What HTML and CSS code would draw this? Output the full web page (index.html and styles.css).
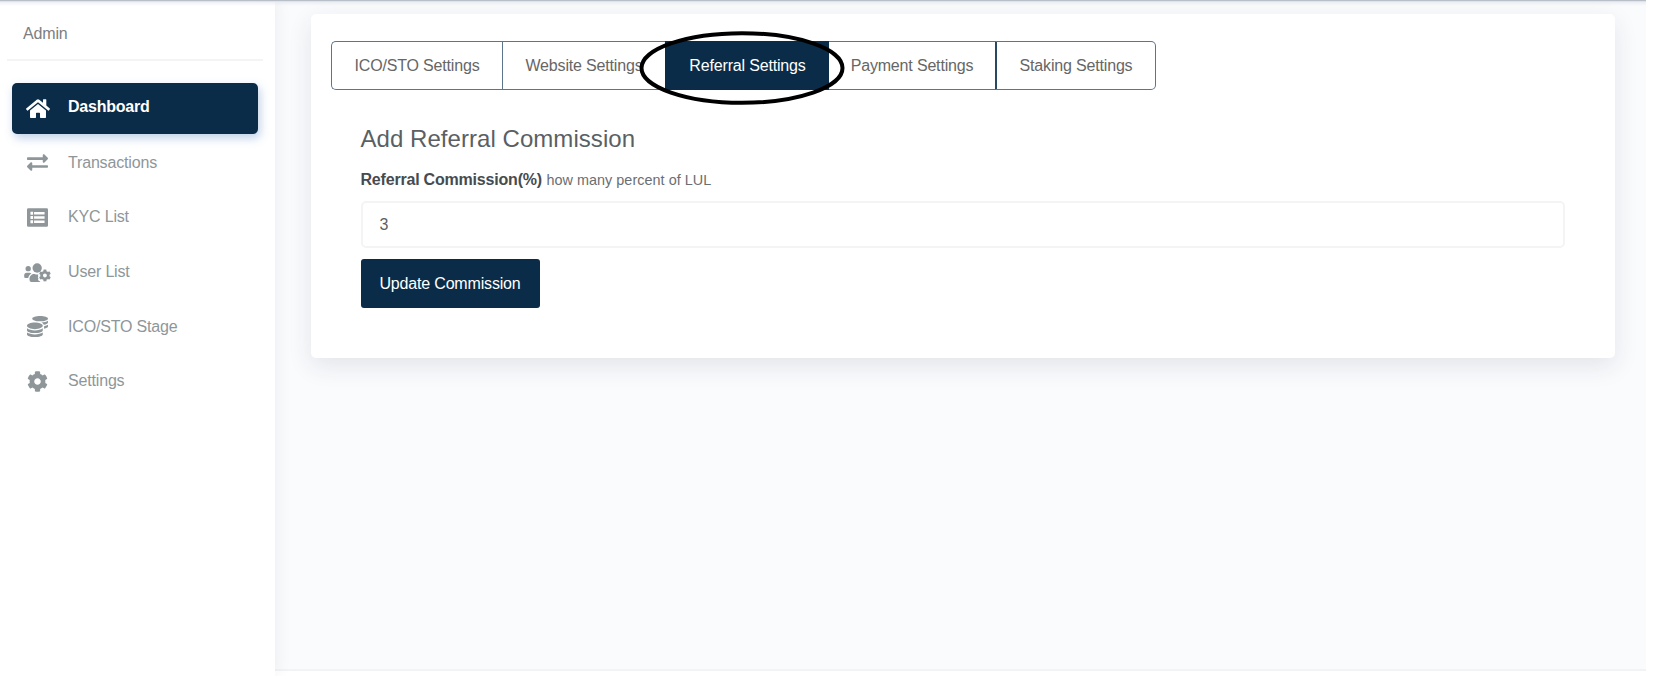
FILE: index.html
```html
<!DOCTYPE html>
<html lang="en">
<head>
<meta charset="utf-8">
<title>Referral Settings</title>
<link rel="stylesheet" href="styles.css">
</head>
<body>
<div class="app">
  <aside class="sidebar">
    <div class="role"><span class="t-admin">Admin</span></div>
    <nav class="menu">
      <a class="item active"><svg class="icon" width="24" height="21.3" viewBox="0 0 576 512"><path d="M280.37 148.26L96 300.11V464a16 16 0 0 0 16 16l112.06-.29a16 16 0 0 0 15.92-16V368a16 16 0 0 1 16-16h64a16 16 0 0 1 16 16v95.64a16 16 0 0 0 16 16.05L464 480a16 16 0 0 0 16-16V300L295.67 148.26a12.19 12.19 0 0 0-15.3 0zM571.6 251.47L488 182.56V44.05a12 12 0 0 0-12-12h-56a12 12 0 0 0-12 12v72.61L318.47 43a48 48 0 0 0-61 0L4.34 251.47a12 12 0 0 0-1.6 16.9l25.5 31A12 12 0 0 0 45.15 301l235.22-193.74a12.19 12.19 0 0 1 15.3 0L530.9 301a12 12 0 0 0 16.9-1.6l25.5-31a12 12 0 0 0-1.7-16.93z"/></svg><span>Dashboard</span></a>
      <a class="item"><svg class="icon" width="21" height="21" viewBox="0 0 512 512"><path d="M0 168v-16c0-13.255 10.745-24 24-24h360V80c0-21.367 25.899-32.042 40.971-16.971l80 80c9.372 9.373 9.372 24.569 0 33.941l-80 80C409.956 271.982 384 261.456 384 240v-48H24c-13.255 0-24-10.745-24-24zm488 152H128v-48c0-21.314-25.862-32.08-40.971-16.971l-80 80c-9.372 9.373-9.372 24.569 0 33.941l80 80C102.057 463.997 128 453.437 128 432v-48h360c13.255 0 24-10.745 24-24v-16c0-13.255-10.745-24-24-24z"/></svg><span>Transactions</span></a>
      <a class="item"><svg class="icon" width="21" height="21" viewBox="0 0 512 512"><path fill-rule="evenodd" d="M32 32h448a32 32 0 0 1 32 32v384a32 32 0 0 1-32 32H32a32 32 0 0 1-32-32V64a32 32 0 0 1 32-32zM84 116v72h64v-72zM84 220v72h64v-72zM84 324v72h64v-72zM172 122v60h256v-60zM172 226v60h256v-60zM172 330v60h256v-60z"/></svg><span>KYC List</span></a>
      <a class="item"><svg class="icon" width="27" height="21.3" viewBox="0 0 640 512"><circle cx="96" cy="160" r="64"/><circle cx="312" cy="144" r="112"/><path d="M64 256h64c18 0 34 7 46 19-42 23-71 64-77 109H32a32 32 0 0 1-32-32v-32a64 64 0 0 1 64-64z"/><path d="M244 288h9c38 18 80 18 90 0-14 22-10 40-4 54-16 24-12 38 8 50-18 16-16 44 4 60l34 18v10H176a48 48 0 0 1-48-48v-29c0-64 52-115 116-115z"/><path fill-rule="evenodd" transform="translate(350 176) scale(.58)" d="M487.4 315.7l-42.6-24.6c4.3-23.2 4.3-47 0-70.2l42.6-24.6c4.9-2.8 7.1-8.6 5.5-14-11.1-35.6-30-67.8-54.7-94.6-3.8-4.1-10-5.1-14.8-2.3L380.8 110c-17.9-15.4-38.5-27.3-60.8-35.1V25.8c0-5.6-3.9-10.5-9.4-11.7-36.7-8.2-74.3-7.8-109.2 0-5.5 1.2-9.4 6.1-9.4 11.7V75c-22.2 7.9-42.8 19.8-60.8 35.1L88.7 85.5c-4.9-2.8-11-1.9-14.8 2.3-24.7 26.7-43.6 58.9-54.7 94.6-1.7 5.4.6 11.2 5.5 14L67.3 221c-4.3 23.2-4.3 47 0 70.2l-42.6 24.6c-4.9 2.8-7.1 8.6-5.5 14 11.1 35.6 30 67.8 54.7 94.6 3.8 4.1 10 5.1 14.8 2.3l42.6-24.6c17.9 15.4 38.5 27.3 60.8 35.1v49.2c0 5.6 3.9 10.5 9.4 11.7 36.7 8.2 74.3 7.8 109.2 0 5.5-1.2 9.4-6.1 9.4-11.7v-49.2c22.2-7.9 42.8-19.8 60.8-35.1l42.6 24.6c4.9 2.8 11 1.9 14.8-2.3 24.7-26.7 43.6-58.9 54.7-94.6 1.5-5.5-.7-11.3-5.6-14.1zM256 336c-44.1 0-80-35.9-80-80s35.9-80 80-80 80 35.9 80 80-35.9 80-80 80z"/></svg><span>User List</span></a>
      <a class="item"><svg class="icon" width="21" height="21" viewBox="0 0 512 512"><path d="M0 405.3V448c0 35.3 86 64 192 64s192-28.7 192-64v-42.7C342.7 434.4 267.2 448 192 448S41.3 434.4 0 405.3zM320 128c106 0 192-28.7 192-64S426 0 320 0 128 28.7 128 64s86 64 192 64zM0 300.4V352c0 35.3 86 64 192 64s192-28.7 192-64v-51.6c-41.3 34-116.9 51.6-192 51.6S41.3 334.4 0 300.4zm416 11c57.3-11.1 96-31.7 96-55.4v-42.7c-23.2 16.4-57.3 27.6-96 34.5v63.6zM192 160C86 160 0 195.8 0 240s86 80 192 80 192-35.8 192-80-86-80-192-80zm219.3 56.3c60-10.8 100.7-32 100.7-56.3v-42.7c-35.5 25.1-96.5 38.6-160.7 41.8 29.5 14.3 51.2 33.5 60 57.2z"/></svg><span>ICO/STO Stage</span></a>
      <a class="item"><svg class="icon" width="21" height="21" viewBox="0 0 512 512"><path d="M487.4 315.7l-42.6-24.6c4.3-23.2 4.3-47 0-70.2l42.6-24.6c4.9-2.8 7.1-8.6 5.5-14-11.1-35.6-30-67.8-54.7-94.6-3.8-4.1-10-5.1-14.8-2.3L380.8 110c-17.9-15.4-38.5-27.3-60.8-35.1V25.8c0-5.6-3.9-10.5-9.4-11.7-36.7-8.2-74.3-7.8-109.2 0-5.5 1.2-9.4 6.1-9.4 11.7V75c-22.2 7.9-42.8 19.8-60.8 35.1L88.7 85.5c-4.9-2.8-11-1.9-14.8 2.3-24.7 26.7-43.6 58.9-54.7 94.6-1.7 5.4.6 11.2 5.5 14L67.3 221c-4.3 23.2-4.3 47 0 70.2l-42.6 24.6c-4.9 2.8-7.1 8.6-5.5 14 11.1 35.6 30 67.8 54.7 94.6 3.8 4.1 10 5.1 14.8 2.3l42.6-24.6c17.9 15.4 38.5 27.3 60.8 35.1v49.2c0 5.6 3.9 10.5 9.4 11.7 36.7 8.2 74.3 7.8 109.2 0 5.5-1.2 9.4-6.1 9.4-11.7v-49.2c22.2-7.9 42.8-19.8 60.8-35.1l42.6 24.6c4.9 2.8 11 1.9 14.8-2.3 24.7-26.7 43.6-58.9 54.7-94.6 1.5-5.5-.7-11.3-5.6-14.1zM256 336c-44.1 0-80-35.9-80-80s35.9-80 80-80 80 35.9 80 80-35.9 80-80 80z"/></svg><span>Settings</span></a>
    </nav>
  </aside>
  <main class="content">
    <section class="card">
      <div class="tabs">
        <button class="tab tab-ico">ICO/STO Settings</button>
        <button class="tab tab-web">Website Settings</button>
        <button class="tab tab-ref selected">Referral Settings
          <svg class="ring" width="206" height="76" viewBox="0 0 206 76"><ellipse cx="103" cy="38" rx="100.5" ry="34.8"/></svg>
        </button>
        <button class="tab tab-pay">Payment Settings</button>
        <button class="tab tab-stake">Staking Settings</button>
      </div>
      <form class="form">
        <h4 class="title">Add Referral Commission</h4>
        <label class="label"><b>Referral Commission(%)</b> <small>how many percent of LUL</small></label>
        <input class="field" type="text" value="3">
        <button class="submit" type="button">Update Commission</button>
      </form>
    </section>
    <footer class="footer"></footer>
  </main>
  <div class="topline"></div>
</div>
</body>
</html>
```
FILE: styles.css
```css
* { box-sizing: border-box; }
body {
  margin: 0;
  background: #fff;
  font-family: "Liberation Sans", Arial, sans-serif;
  font-size: 16px;
  letter-spacing: -0.17px;
  color: #5b5f63;
}
.app {
  position: relative;
  display: flex;
  width: 1646px;
  height: 676px;
  overflow: hidden;
}
.topline {
  position: absolute;
  z-index: 2;
  top: 0;
  left: 0;
  width: 100%;
  height: 6px;
  background: linear-gradient(#b9bfc8 0 1px, #e0e4e9 1px 2px, rgba(225, 229, 234, .6) 2px, rgba(240, 242, 245, 0));
}
.sidebar {
  z-index: 1;
  width: 275px;
  flex: none;
  background: #fff;
  box-shadow: 0 0 16px rgba(40, 50, 70, .08);
}
.role {
  height: 61px;
  margin: 0 12px 0 7px;
  padding: 24px 0 0 16px;
  border-bottom: 2px solid #f4f4f5;
  line-height: 20px;
  color: #7c7e80;
}
.menu {
  display: flex;
  flex-direction: column;
  padding: 22px 17px 0 12px;
}
.item {
  display: grid;
  grid-template-columns: 51px 1fr;
  align-items: center;
  height: 54.7px;
  color: #8e9699;
}
.item span { padding-left: 5px; margin-top: -.4px; }
.icon { justify-self: center; fill: currentColor; }
.item.active {
  height: 51px;
  margin-bottom: 1.5px;
  border-radius: 5px;
  background: #0a2c48;
  box-shadow: 2px 4px 10px rgba(70, 120, 190, .35);
  color: #fff;
  font-weight: bold;
}
.item.active span { margin-top: -3px; letter-spacing: -.22px; }
.content {
  flex: 1;
  display: flex;
  flex-direction: column;
  justify-content: space-between;
  padding: 14px 31px 0 36px;
  background: #fafbfd;
}
.card {
  height: 344px;
  padding: 27px 20px;
  border-radius: 5px;
  background: #fff;
  box-shadow: 0 8px 24px rgba(40, 50, 65, .11);
}
.tabs { display: flex; width: 825px; height: 49px; }
.tab {
  position: relative;
  flex: none;
  padding: 0;
  border: solid #5c758a;
  border-width: 1px 0 1px 1px;
  background: #fff;
  font: inherit;
  letter-spacing: inherit;
  color: #666;
}
.tab-ico { width: 171px; border-radius: 5px 0 0 5px; }
.tab-web { width: 163px; }
.tab-ref { width: 164px; }
.tab-pay { width: 166px; border-left-width: 0; }
.tab-stake { flex: 1; border-right-width: 1px; border-left: 2px solid #274963; border-radius: 0 5px 5px 0; }
.selected { z-index: 1; background: #0a2c48; border-color: #0a2c48; color: #fff; }
.ring {
  position: absolute;
  left: -27.5px;
  top: -12px;
  fill: none;
  stroke: #000;
  stroke-width: 4;
}
.form { display: flex; flex-direction: column; align-items: flex-start; padding: 35px 30px 0 29.5px; }
.title { margin: 0; font-size: 24px; font-weight: normal; line-height: 28px; letter-spacing: .05px; }
.label { margin-top: 17px; line-height: 20px; letter-spacing: 0; }
.label b { letter-spacing: -.2px; color: #464b50; }
.label small { font-size: 14.4px; letter-spacing: .04px; color: #6a6e72; }
.field {
  width: 100%;
  height: 47px;
  margin: 11px 0 11px;
  padding: 0 17px;
  border: 2px solid #f4f4f7;
  border-radius: 5px;
  background: #fff;
  font: inherit;
  color: #5b5f63;
}
.submit {
  width: 179px;
  height: 49px;
  padding: 0;
  border: 0;
  border-radius: 3px;
  background: #0a2c48;
  font: inherit;
  letter-spacing: inherit;
  color: #fff;
}
.footer { height: 7px; margin: 0 -31px 0 -36px; border-top: 2px solid #f2f3f4; background: #fff; }
```
